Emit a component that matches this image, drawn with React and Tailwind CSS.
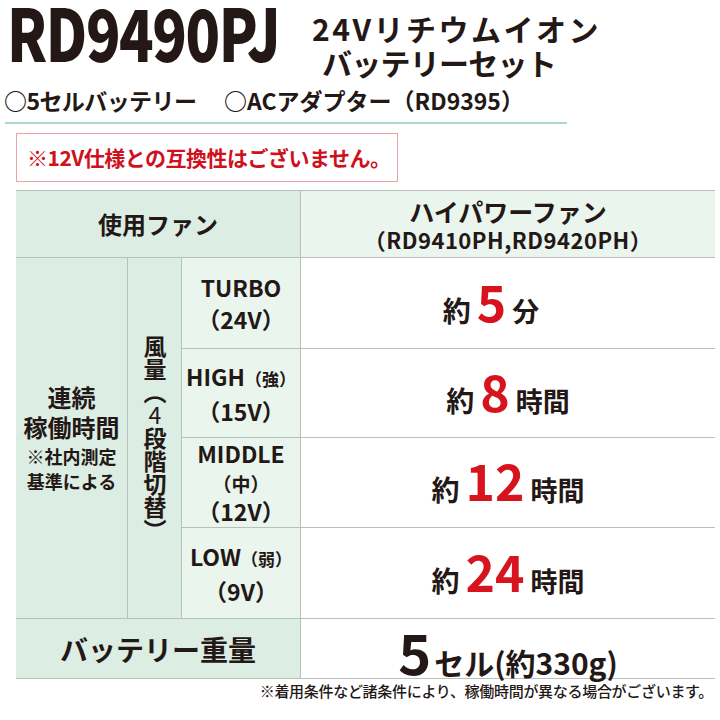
import React from 'react';

const rows = [
  { mode: <>TURBO<br />（24V）</>, num: '5', unit: '分', shift: 'mr-[34px]' },
  { mode: <>HIGH<span className="text-[17px]">（強）</span><br />（15V）</>, num: '8', unit: '時間', shift: '' },
  { mode: <>MIDDLE<br /><span className="text-[19px] leading-[26px]">（中）</span><br />（12V）</>, num: '12', unit: '時間', shift: '' },
  { mode: <>LOW<span className="text-[17px]">（弱）</span><br />（9V）</>, num: '24', unit: '時間', shift: '' },
];

function ValueCell({ num, unit, shift }) {
  return (
    <div className="bg-white flex items-center justify-center">
      <div className={`flex items-baseline font-bold ${shift}`}>
        <span className="text-[28px]">約</span>
        <span className="text-[50px] leading-none text-[#d7141e] mx-[6px]">{num}</span>
        <span className="text-[27px]">{unit}</span>
      </div>
    </div>
  );
}

export default function App() {
  return (
    <div className="w-[720px] h-[720px] overflow-hidden bg-white text-[#231815] font-['Noto_Sans_CJK_JP','Noto_Sans',sans-serif]">
      <div className="flex h-[85px]">
        <div className="w-[312px] pl-[7px] -mt-[5px]">
          <div className="inline-block origin-left scale-x-[0.79] text-[72px] font-black leading-none tracking-tight">RD9490PJ</div>
        </div>
        <div className="pt-[11px] text-[30px] font-bold leading-[34px]">
          <div className="tracking-[2.5px]">24Vリチウムイオン</div>
          <div className="pl-[10px] tracking-tight">バッテリーセット</div>
        </div>
      </div>

      <div className="flex h-[30px] pl-[4px] text-[23px] font-bold leading-[30px]">
        <span className="w-[220px] tracking-tight">○5セルバッテリー</span>
        <span>○ACアダプター（RD9395）</span>
      </div>
      <div className="ml-[5px] mt-[7px] w-[562px] h-[2px] bg-[#a9d8cf]" />

      <div className="ml-[16px] mt-[9px] w-[382px] h-[49px] border-[1.5px] border-[#e9a3a8] flex items-center pl-[10px]">
        <span className="text-[21px] font-bold text-[#cf111d] tracking-[-0.5px]">※12V仕様との互換性はございません。</span>
      </div>

      <div className="ml-[16px] mt-[8px] w-[699px] grid grid-cols-[111px_53px_118px_1fr] grid-rows-[66px_90px_88px_89px_90px_59px] gap-px py-px bg-[#b7c0bb]">
        <div className="col-span-3 bg-[#dcede3] flex items-center justify-center text-[24px] font-semibold">使用ファン</div>
        <div className="bg-[#eaf5ee] flex flex-col items-center justify-center font-bold">
          <span className="text-[25px] leading-[30px]">ハイパワーファン</span>
          <span className="text-[22px] leading-[26px] tracking-[0.5px]">（RD9410PH,RD9420PH）</span>
        </div>

        <div className="row-span-4 bg-[#dcede3] flex flex-col items-center justify-center font-bold text-center">
          <span className="text-[24px] leading-[30px]">連続</span>
          <span className="text-[24px] leading-[30px]">稼働時間</span>
          <span className="text-[18px] leading-[25px] mt-[2px]">※社内測定</span>
          <span className="text-[18px] leading-[25px]">基準による</span>
        </div>
        <div className="row-span-4 bg-[#dcede3] flex items-center justify-center">
          <span className="[writing-mode:vertical-rl] [text-orientation:upright] text-[23px] font-bold leading-none">風量（<span className="font-normal">4</span>段階切替）</span>
        </div>

        {rows.map((r, i) => (
          <React.Fragment key={i}>
            <div className={`bg-[#eaf5ee] flex items-center justify-center text-center text-[23px] font-bold ${i === 2 ? 'leading-[29px]' : 'leading-[32px]'} col-start-3`}>
              <div>{r.mode}</div>
            </div>
            <ValueCell num={r.num} unit={r.unit} shift={r.shift} />
          </React.Fragment>
        ))}

        <div className="col-span-3 bg-[#dcede3] flex items-center justify-center text-[28px] font-bold">バッテリー重量</div>
        <div className="bg-white flex items-baseline justify-center font-bold pt-[4px]">
          <span className="text-[56px] leading-[56px] mr-[3px]">5</span>
          <span className="text-[30px]">セル(約330g)</span>
        </div>
      </div>

      <div className="mt-[2px] pr-[7px] text-right text-[15px] leading-[20px] font-medium tracking-[-0.3px]">※着用条件など諸条件により、稼働時間が異なる場合がございます。</div>
    </div>
  );
}
